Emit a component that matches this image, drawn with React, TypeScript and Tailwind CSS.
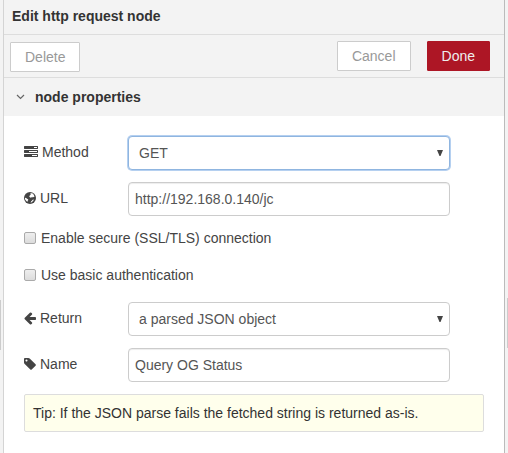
import type { ReactNode } from "react";

function Icon({ wide = false, children }: { wide?: boolean; children: ReactNode }) {
  return (
    <svg
      viewBox={wide ? "0 0 1792 1792" : "128 0 1536 1792"}
      className={wide ? "h-3.5 w-3.5 shrink-0" : "h-3.5 w-3 shrink-0"}
      fill="currentColor"
      aria-hidden="true"
    >
      {children}
    </svg>
  );
}

function TasksIcon() {
  return (
    <Icon wide>
      <path d="M1024 1408h640v-128h-640v128zm-384-512h1024v-128h-1024v128zm640-512h384v-128h-384v128zm512 832v256q0 26-19 45t-45 19h-1664q-26 0-45-19t-19-45v-256q0-26 19-45t45-19h1664q26 0 45 19t19 45zm0-512v256q0 26-19 45t-45 19h-1664q-26 0-45-19t-19-45v-256q0-26 19-45t45-19h1664q26 0 45 19t19 45zm0-512v256q0 26-19 45t-45 19h-1664q-26 0-45-19t-19-45v-256q0-26 19-45t45-19h1664q26 0 45 19t19 45z" />
    </Icon>
  );
}

function GlobeIcon() {
  return (
    <Icon>
      <circle cx="896" cy="896" r="768" />
      <path
        fill="#fff"
        d="M940 300L1180 290L1330 410L1420 560L1460 720L1380 800L1260 740L1200 840L1080 800L1000 860L880 800L800 700L860 560L980 480Z M270 860L400 900L520 1000L640 1060L680 1150L600 1240L580 1360L500 1340L400 1260L290 1110L250 960Z M1160 1200L1280 1100L1390 1110L1290 1290L1110 1440L970 1490L1030 1350Z"
      />
    </Icon>
  );
}

function ArrowLeftIcon() {
  return (
    <Icon>
      <path d="M1664 896v128q0 53-32.5 90.5t-84.5 37.5h-704l293 294q38 36 38 90t-38 90l-75 76q-37 37-90 37-52 0-91-37l-651-652q-37-37-37-90 0-52 37-91l651-650q38-38 91-38 52 0 90 38l75 74q38 38 38 91t-38 91l-293 293h704q52 0 84.5 37.5t32.5 90.5z" />
    </Icon>
  );
}

function TagIcon() {
  return (
    <Icon>
      <path d="M576 448q0-53-37.5-90.5t-90.5-37.5-90.5 37.5-37.5 90.5 37.5 90.5 90.5 37.5 90.5-37.5 37.5-90.5zm1067 576q0 53-37 90l-491 492q-39 37-91 37-53 0-90-37l-715-716q-38-37-64.5-101t-26.5-117v-416q0-52 38-90t90-38h416q53 0 117 26.5t102 64.5l715 714q37 39 37 91z" />
    </Icon>
  );
}

function Row({ id, icon, label, children }: { id: string; icon: ReactNode; label: string; children: ReactNode }) {
  return (
    <div className="flex">
      <label htmlFor={id} className="flex h-8 w-26 shrink-0 items-center gap-1">
        {icon}
        {label}
      </label>
      <div className="relative w-[70%]">{children}</div>
    </div>
  );
}

function Select({ id, focused = false, options }: { id: string; focused?: boolean; options: string[] }) {
  return (
    <>
      <select
        id={id}
        className={`block h-[34px] w-full appearance-none rounded border bg-white pr-6 pl-2.5 text-[#555] outline-none ${
          focused ? "border-[#8fb5e0] ring-1 ring-[#b5d0f0]" : "border-[#ccc]"
        }`}
      >
        {options.map((option) => (
          <option key={option}>{option}</option>
        ))}
      </select>
      <svg viewBox="0 0 6 6" className="pointer-events-none absolute top-3.5 right-[7px] h-1.5 w-1.5" fill="#444" aria-hidden="true">
        <path d="M0 0h6L3.5 6h-1z" />
      </svg>
    </>
  );
}

function TextInput({ id, value }: { id: string; value: string }) {
  return (
    <input
      id={id}
      type="text"
      defaultValue={value}
      className="block h-[34px] w-full rounded border border-[#ccc] bg-white px-1.5 text-[#555] shadow-[inset_0_1px_1px_rgba(0,0,0,0.075)] outline-none"
    />
  );
}

function Checkbox({ label }: { label: string }) {
  return (
    <label className="flex h-5 items-center gap-[5px]">
      <input
        type="checkbox"
        className="h-3 w-3 shrink-0 appearance-none rounded-xs border border-[#aaa] bg-linear-to-b from-[#eee] to-[#dcdcdc]"
      />
      {label}
    </label>
  );
}

export default function App() {
  return (
    <div className="flex min-h-screen bg-[#f3f3f3] font-['Liberation_Sans',Arial,sans-serif] text-[14px] leading-5 text-[#444]">
      <div className="flex w-[3px] pt-[300px]">
        <div className="h-[50px] w-px bg-[#ccc]" />
      </div>
      <main className="min-w-0 flex-1 border-r border-l border-r-[#bbb] border-l-[#d4d4d4] bg-white">
        <div className="bg-[#f3f3f3]">
          <h1 className="h-[35px] border-b border-[#ddd] px-2 pt-1.5 font-bold text-[#333]">Edit http request node</h1>
          <div className="flex h-[43px] border-b border-[#ddd] pt-1.5 pr-3.5 pl-1.5">
            <button type="button" className="mt-px mr-auto h-[30px] rounded-[1px] border border-[#ccc] bg-white px-3.5 text-[#999]">
              Delete
            </button>
            <button type="button" className="mr-4 h-[30px] rounded-[1px] border border-[#ccc] bg-white px-3.5 text-[#999]">
              Cancel
            </button>
            <button type="button" className="h-[30px] rounded-[1px] border border-[#ad1625] bg-[#ad1625] px-3.5 text-[#eee]">
              Done
            </button>
          </div>
          <h2 className="h-[38px] font-bold text-[#333]">
            <button type="button" className="flex h-full w-full items-center gap-2.5 px-3">
              <svg viewBox="0 0 9 6" className="h-1.5 w-[9px]" fill="none" stroke="#666" strokeWidth="1.2" aria-hidden="true">
                <path d="M1 1l3.5 3.5L8 1" />
              </svg>
              node properties
            </button>
          </h2>
        </div>
        <form className="flex flex-col gap-3 p-5">
          <Row id="method" icon={<TasksIcon />} label="Method">
            <Select id="method" focused options={["GET", "POST", "PUT", "DELETE"]} />
          </Row>
          <Row id="url" icon={<GlobeIcon />} label="URL">
            <TextInput id="url" value="http://192.168.0.140/jc" />
          </Row>
          <div className="flex flex-col gap-[17px] pb-[5px]">
            <Checkbox label="Enable secure (SSL/TLS) connection" />
            <Checkbox label="Use basic authentication" />
          </div>
          <Row id="return" icon={<ArrowLeftIcon />} label="Return">
            <Select id="return" options={["a parsed JSON object", "a UTF-8 string", "a binary buffer"]} />
          </Row>
          <Row id="name" icon={<TagIcon />} label="Name">
            <TextInput id="name" value="Query OG Status" />
          </Row>
          <p className="rounded-[2px] border border-[#ddd] bg-[#ffffec] p-2 text-[#333]">
            Tip: If the JSON parse fails the fetched string is returned as-is.
          </p>
        </form>
      </main>
      <div className="flex w-[3px] justify-end pt-[298px]">
        <div className="h-[50px] w-px bg-[#ccc]" />
      </div>
    </div>
  );
}
